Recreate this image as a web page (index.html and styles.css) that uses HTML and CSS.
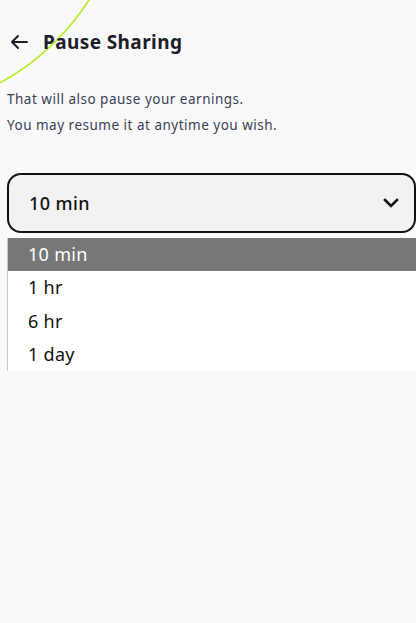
FILE: index.html
```html
<!DOCTYPE html>
<html lang="en">
<head>
<meta charset="utf-8">
<title>Pause Sharing</title>
<link rel="stylesheet" href="styles.css">
</head>
<body>
<svg class="deco" width="120" height="100" viewBox="0 0 120 100" aria-hidden="true">
  <circle cx="-118" cy="-133" r="246" fill="none" stroke="#b2ef1c" stroke-width="1.6"/>
</svg>
<div class="page">
  <header class="header">
    <svg class="back" width="20" height="16" viewBox="0 0 20 16" aria-hidden="true">
      <path d="M18 8H3M9 2L3 8l6 6" fill="none" stroke="#1e1e2a" stroke-width="2" stroke-linecap="round" stroke-linejoin="round"/>
    </svg>
    <h1 class="title">Pause Sharing</h1>
  </header>
  <div class="desc">
    <p>That will also pause your earnings.</p>
    <p>You may resume it at anytime you wish.</p>
  </div>
  <div class="select">
    <span class="select-value">10 min</span>
    <svg class="chev" width="16" height="10" viewBox="0 0 16 10" aria-hidden="true">
      <path d="M2 2l6 6 6-6" fill="none" stroke="#111" stroke-width="2.6" stroke-linecap="square"/>
    </svg>
  </div>
  <ul class="list">
    <li class="item active">10 min</li>
    <li class="item">1 hr</li>
    <li class="item">6 hr</li>
    <li class="item">1 day</li>
  </ul>
</div>
</body>
</html>
```

FILE: styles.css
```css
* { box-sizing: border-box; }
html, body {
  margin: 0;
  padding: 0;
  background: #f9f9f9;
  font-family: "Noto Sans", "Lato", sans-serif;
  color: #1e1e2a;
}
body { position: relative; width: 416px; height: 623px; overflow: hidden; }
.deco {
  position: absolute;
  left: 0;
  top: 0;
  pointer-events: none;
}
.page {
  position: relative;
  padding: 0 0 0 7px;
}
.header {
  display: flex;
  align-items: center;
  height: 84px;
  gap: 14px;
  padding-left: 2px;
}
.back { display: block; }
.title {
  margin: 0;
  font-size: 19px;
  font-weight: 700;
  letter-spacing: 0.4px;
  color: #1e1e2a;
}
.desc {
  display: flex;
  flex-direction: column;
  gap: 6px;
  padding-top: 5px;
}
.desc p {
  margin: 0;
  font-size: 13.5px;
  line-height: 20px;
  letter-spacing: 0.5px;
  color: #3a3f55;
}
.select {
  margin-top: 38px;
  width: 409px;
  height: 60px;
  border: 2px solid #111;
  border-radius: 14px;
  background: #f2f2f2;
  display: flex;
  align-items: center;
  justify-content: space-between;
  padding: 0 15px 0 20px;
}
.select-value {
  font-size: 18px;
  font-weight: 500;
  letter-spacing: 0.4px;
  color: #111;
}
.chev { display: block; }
.list {
  list-style: none;
  margin: 5px 0 0 0;
  padding: 0;
  width: 409px;
  background: #fff;
  border-left: 1px solid #c9c9c9;
}
.item {
  height: 33.25px;
  line-height: 33px;
  padding-left: 20px;
  font-size: 18px;
  letter-spacing: 0.3px;
  color: #111;
}
.item.active {
  background: #777777;
  color: #fff;
}
```
